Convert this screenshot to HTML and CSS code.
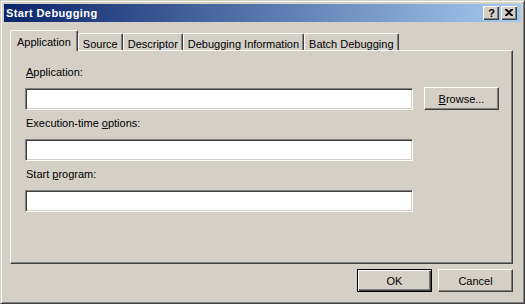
FILE: index.html
```html
<!DOCTYPE html>
<html lang="en">
<head>
    <meta charset="UTF-8">
    <title>Start Debugging</title>
    <link rel="stylesheet" href="styles.css">
</head>
<body>

    <div class="window">
        <!-- Title bar -->
        <div class="titlebar">
            <span class="title">Start Debugging</span>
            <div class="caption-buttons">
                <span class="caption-btn help">?</span>
                <span class="caption-btn close">
                    <svg width="8" height="7" viewBox="0 0 8 7">
                        <path d="M0 0h2l2 2 2-2h2v1L5 3.5 8 6v1H6L4 5 2 7H0V6l3-2.5L0 1z" fill="#000"/>
                    </svg>
                </span>
            </div>
        </div>

        <!-- Tabs -->
        <div class="tabs">
            <div class="tab active">Application</div>
            <div class="tab">Source</div>
            <div class="tab">Descriptor</div>
            <div class="tab">Debugging Information</div>
            <div class="tab">Batch Debugging</div>
        </div>

        <div class="panel">
            <div class="field">
                <label><u>A</u>pplication:</label>
                <div class="field-row">
                    <div class="textbox"></div>
                    <button class="btn browse"><u>B</u>rowse...</button>
                </div>
            </div>
            <div class="field">
                <label>Execution-time <u>o</u>ptions:</label>
                <div class="field-row">
                    <div class="textbox"></div>
                </div>
            </div>
            <div class="field">
                <label>Start <u>p</u>rogram:</label>
                <div class="field-row">
                    <div class="textbox"></div>
                </div>
            </div>
        </div>

        <!-- Dialog buttons -->
        <div class="footer">
            <button class="btn default">OK</button>
            <button class="btn">Cancel</button>
        </div>
    </div>

</body>
</html>
```

FILE: styles.css
```css
/* Global Styles */
body {
    margin: 0;
    padding: 0;
    font-family: 'Liberation Sans', Arial, sans-serif;
    font-size: 11px;
    color: #000;
    background: #D4D0C8;
}

.window {
    width: 525px;
    height: 304px;
    box-sizing: border-box;
    background: #D4D0C8;
    border: 1px solid;
    border-color: #D4D0C8 #404040 #404040 #D4D0C8;
    box-shadow: inset 1px 1px #fff, inset -1px -1px #808080;
    padding: 3px;
    display: flex;
    flex-direction: column;
}

/* Title bar */
.titlebar {
    height: 18px;
    flex: none;
    display: flex;
    align-items: center;
    justify-content: space-between;
    background: linear-gradient(to right, #0A246A, #A6CAF0);
    padding: 0 4px 0 2px;
}

.title {
    color: #fff;
    font-weight: bold;
    font-size: 11px;
    letter-spacing: 0.4px;
}

.caption-buttons {
    display: flex;
    gap: 2px;
}

.caption-btn {
    width: 16px;
    height: 14px;
    box-sizing: border-box;
    background: #D4D0C8;
    box-shadow: inset 1px 1px #fff, inset -1px -1px #404040, inset -2px -2px #808080;
    display: flex;
    align-items: center;
    justify-content: center;
}

.caption-btn.help {
    font-weight: bold;
    font-size: 11px;
    line-height: 14px;
    padding-left: 1px;
}

.caption-btn.close svg {
    display: block;
    margin-top: -1px;
}

/* Tabs */
.tabs {
    display: flex;
    align-items: flex-end;
    margin: 8px 0 0 6px;
    padding-left: 2px;
    flex: none;
}

.tab {
    height: 17px;
    box-sizing: border-box;
    padding: 3px 4px 0;
    line-height: 14px;
    white-space: nowrap;
    border: 1px solid;
    border-bottom: none;
    border-color: #fff #404040 transparent #fff;
    border-radius: 2px 2px 0 0;
    box-shadow: inset -1px 0 #808080;
    background: #D4D0C8;
}

.tab.active {
    position: relative;
    z-index: 1;
    height: 21px;
    margin: 0 0 -1px -2px;
    padding: 4px 6px 0;
}

/* Tab panel */
.panel {
    flex: none;
    height: 214px;
    box-sizing: border-box;
    margin: 0 8px 0 6px;
    border: 1px solid;
    border-color: #fff #404040 #404040 #fff;
    box-shadow: inset -1px -1px #808080;
    padding: 14px 0 0 14px;
}

.field {
    margin-bottom: 6px;
}

.field label {
    display: block;
    line-height: 14px;
    padding-left: 1px;
    margin-bottom: 8px;
}

.field-row {
    display: flex;
    align-items: flex-start;
}

.textbox {
    width: 388px;
    height: 22px;
    box-sizing: border-box;
    margin-top: 1px;
    background: #fff;
    border: 1px solid;
    border-color: #808080 #fff #fff #808080;
    box-shadow: inset 1px 1px #404040, inset -1px -1px #D4D0C8;
}

/* Buttons */
.btn {
    width: 75px;
    height: 23px;
    box-sizing: border-box;
    padding: 0;
    font-family: inherit;
    font-size: 11px;
    color: #000;
    background: #D4D0C8;
    border: 1px solid;
    border-color: #fff #404040 #404040 #fff;
    box-shadow: inset -1px -1px #808080;
    border-radius: 0;
}

.btn.browse {
    margin-left: 11px;
}

.btn.default {
    border-color: #000;
    box-shadow: inset 1px 1px #fff, inset -1px -1px #404040, inset -2px -2px #808080;
}

.footer {
    display: flex;
    justify-content: flex-end;
    gap: 6px;
    margin-top: 5px;
    padding-right: 8px;
}
```
